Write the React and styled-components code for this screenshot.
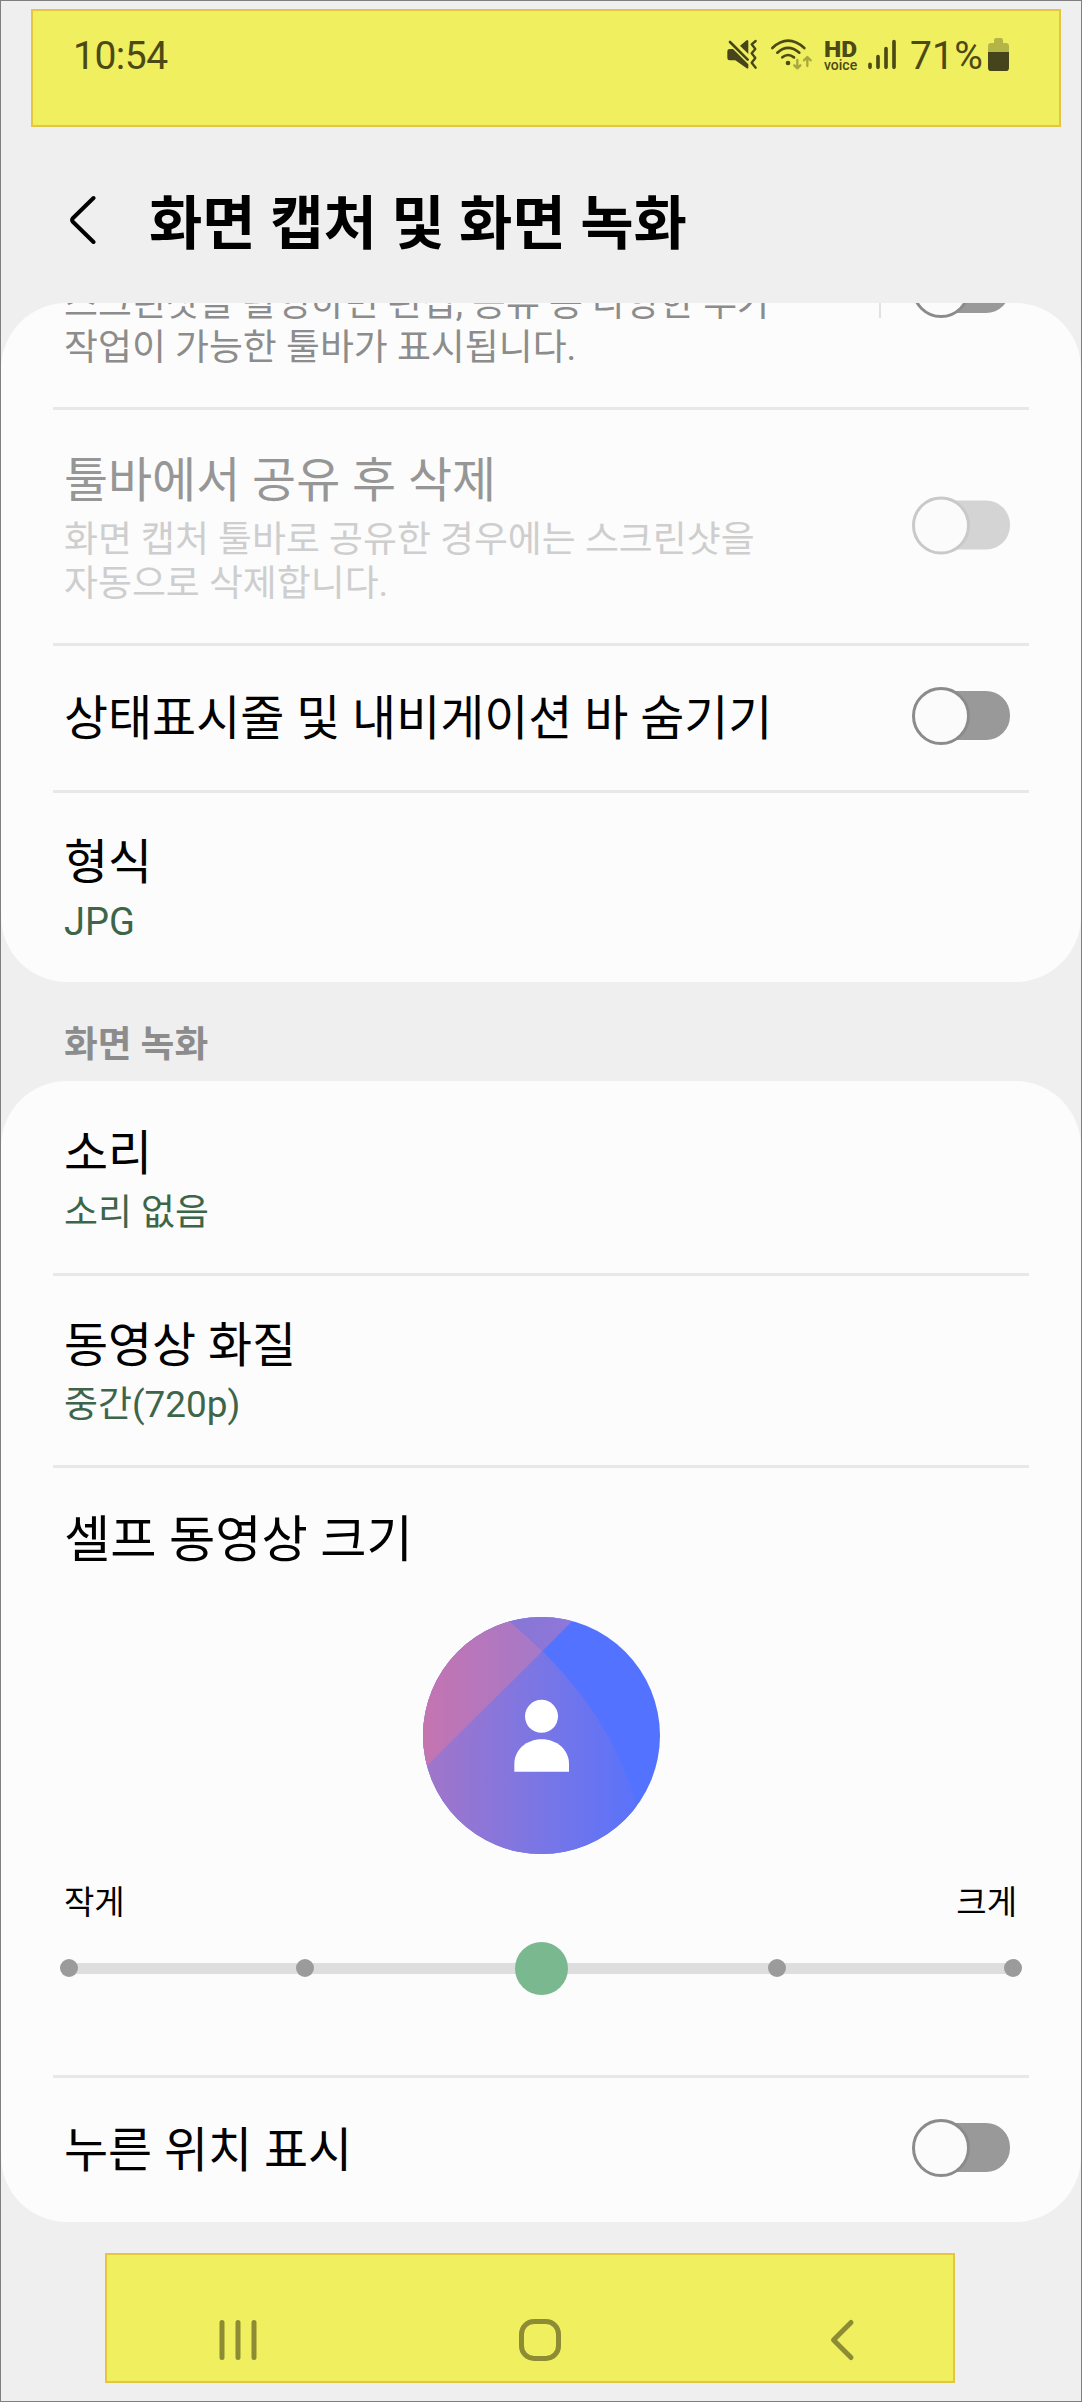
import React from "react";
import styled, { createGlobalStyle } from "styled-components";

const GlobalStyle = createGlobalStyle`
  * { box-sizing: border-box; }
  body { margin: 0; background: #efefef; }
`;

const Screen = styled.div`
  width: 1082px;
  height: 2402px;
  border: 1px solid #7f7f7f;
  background: #efefef;
  overflow: hidden;
  display: flex;
  flex-direction: column;
  color: #000;
  font-family: Roboto, "Noto Sans CJK KR", sans-serif;
`;

const Highlight = styled.div`
  display: flex;
  flex: none;
  background: #f0ef60;
  border: 2px solid #e4c63f;
`;

const StatusBar = styled(Highlight)`
  margin: 8px 20px 0 30px;
  height: 118px;
  padding: 22px 50px 0 40px;
  align-items: flex-start;
  justify-content: space-between;
  color: #4b4a14;
`;

const StatusText = styled.span`
  font-size: 39px;
  line-height: 46px;
  letter-spacing: ${(p) => p.$spacing || 0}px;
`;

const StatusIcons = styled.div`
  display: flex;
  align-items: flex-start;
  height: 46px;
`;

const StatusGlyph = styled.svg`
  display: block;
  flex: none;
  margin-right: ${(p) => p.$gap || 0}px;
  overflow: visible;
`;

const HdVoice = styled.div`
  display: flex;
  flex-direction: column;
  width: 34px;
  margin-right: 10px;
  padding-top: 7px;
`;

const HdText = styled.span`
  font-size: 21.5px;
  line-height: 19px;
  font-weight: 900;
  transform: scaleX(1.14);
  transform-origin: left;
`;

const VoiceText = styled.span`
  font-size: 14px;
  line-height: 12px;
  font-weight: 500;
`;

const Header = styled.header`
  display: flex;
  align-items: center;
  height: 176px;
  padding: 10px 0 0 68px;
  flex: none;
`;

const HeaderTitle = styled.h1`
  margin: 7px 0 0 50px;
  font-size: 58px;
  line-height: 80px;
  font-weight: 700;
  white-space: nowrap;
`;

const Card = styled.section`
  display: flex;
  flex-direction: column;
  flex: none;
  background: #fcfcfc;
  border-radius: 66px;
  overflow: hidden;
`;

const Divider = styled.div`
  height: 3px;
  flex: none;
  margin: 0 52px;
  background: #e8e8e8;
`;

const Row = styled.div`
  display: flex;
  align-items: center;
  justify-content: space-between;
  flex: none;
  height: ${(p) => p.$height}px;
  padding: 0 71px 0 63px;
`;

const ScrolledRow = styled(Row)`
  align-items: flex-start;
  margin-top: -21px;
`;

const ScrolledControls = styled.div`
  display: flex;
  gap: 31px;
  margin-top: -22px;
`;

const VerticalRule = styled.div`
  width: 2px;
  height: 58px;
  background: #e2e2e2;
`;

const TextBlock = styled.div`
  display: flex;
  flex-direction: column;
  padding-top: ${(p) => p.$top || 0}px;
`;

const ItemTitle = styled.div`
  font-size: ${(p) => (p.$large ? 50.3 : 47.9)}px;
  line-height: 60px;
  white-space: nowrap;
  color: ${(p) => (p.$disabled ? "#969696" : "#000")};
`;

const ItemNote = styled.div`
  margin-top: ${(p) => (p.$flush ? 0 : 7)}px;
  margin-bottom: -1px;
  font-size: ${(p) => (p.$latin ? 38 : 36.9)}px;
  line-height: 44px;
  white-space: pre-line;
  color: ${(p) => p.$color || "#8c8c8c"};
`;

const SectionLabel = styled.h2`
  margin: 0;
  padding: 41px 0 0 63px;
  height: 99px;
  flex: none;
  font-size: 36.7px;
  line-height: 44px;
  font-weight: 700;
  color: #8c8c8c;
`;

const SwitchTrack = styled.div`
  position: relative;
  width: 98px;
  height: 58px;
  flex: none;
  transform: translateY(${(p) => p.$shift || 0}px);

  &::before {
    content: "";
    position: absolute;
    left: 16px;
    right: 0;
    top: 4px;
    height: 49px;
    border-radius: 24px;
    background: ${(p) => (p.$disabled ? "#d4d4d4" : "#999")};
  }
`;

const SwitchThumb = styled.div`
  position: absolute;
  left: 0;
  top: 0;
  width: 58px;
  height: 58px;
  border-radius: 50%;
  border: 3px solid ${(p) => (p.$disabled ? "#c9c9c9" : "#8b8b8b")};
  background: #fbfbfb;
`;

const SizeRow = styled.div`
  display: flex;
  flex-direction: column;
  flex: none;
  height: 607px;
  padding: 42px 63px 0;
`;

const Avatar = styled.svg`
  display: block;
  align-self: center;
  margin-top: 47px;
  width: 237px;
  height: 237px;
`;

const SliderLabels = styled.div`
  display: flex;
  justify-content: space-between;
  margin-top: 27px;
  padding-right: 1px;
  font-size: 33px;
  line-height: 44px;
`;

const Slider = styled.div`
  display: flex;
  align-items: center;
  justify-content: space-between;
  height: 54px;
  margin: 16px -4px 0;
  background: linear-gradient(#dedede, #dedede) center / calc(100% - 18px) 11px no-repeat;
`;

const Stop = styled.div`
  width: ${(p) => (p.$active ? 53 : 18)}px;
  height: ${(p) => (p.$active ? 53 : 18)}px;
  margin: 0 ${(p) => (p.$active ? -17.5 : 0)}px;
  border-radius: 50%;
  background: ${(p) => (p.$active ? "#7ab98f" : "#9b9b9b")};
`;

const NavBar = styled(Highlight)`
  width: 850px;
  height: 130px;
  margin: 31px 0 0 104px;
  padding: 63px 99px 0 112px;
  align-items: flex-start;
  justify-content: space-between;
`;

const NavIcon = styled.svg`
  display: block;
  overflow: visible;
  margin-right: ${(p) => p.$gap || 0}px;
`;

const green = "#3d6549";

function Toggle({ disabled, shift }) {
  return (
    <SwitchTrack $disabled={disabled} $shift={shift}>
      <SwitchThumb $disabled={disabled} />
    </SwitchTrack>
  );
}

function MuteVibrateIcon() {
  return (
    <StatusGlyph width="30" height="46" viewBox="140 102 90 138" $gap={14}>
      <path d="M148 150H158L204 196V205Q204 211 199 208L165 184H148Q141 184 141 177V157Q141 150 148 150Z" fill="#45441a" />
      <path d="M179 140L197 125Q204 120 204 128V165Z" fill="#45441a" />
      <path d="M149 129L202 182" stroke="#45441a" strokeWidth="8" strokeLinecap="round" />
      <path d="M226 126L214 136L225 150L214 163L225 177L214 191L226 206" fill="none" stroke="#45441a" strokeWidth="7" strokeLinecap="round" strokeLinejoin="round" />
    </StatusGlyph>
  );
}

function WifiIcon() {
  return (
    <StatusGlyph width="41" height="46" viewBox="272 102 123 138" $gap={12}>
      <g fill="none" stroke="#4b4a14" strokeWidth="8" strokeLinecap="round">
        <path d="M276 147Q323 103 372 147" />
        <path d="M291 161Q323 132 357 161" />
        <path d="M306 175Q323 161 341 175" />
      </g>
      <circle cx="323" cy="192" r="7" fill="#4b4a14" />
      <g fill="none" stroke="#a9a83e" strokeWidth="7" strokeLinecap="round" strokeLinejoin="round">
        <path d="M351 183V208M342 199L351 208L360 199" />
        <path d="M381 201V175M371 184L381 174L391 184" />
      </g>
    </StatusGlyph>
  );
}

function SignalIcon() {
  return (
    <StatusGlyph width="28" height="46" viewBox="561 102 84 138" $gap={14}>
      <path d="M567 196V205M591 173V205M615 149V205M639 128V205" stroke="#4b4a14" strokeWidth="11" strokeLinecap="round" />
    </StatusGlyph>
  );
}

function BatteryIcon() {
  return (
    <StatusGlyph width="21" height="46" viewBox="924 102 63 138">
      <path d="M942 132V124Q942 117 949 117H962Q969 117 969 124V132H977Q987 132 987 142V160H924V142Q924 132 934 132Z" fill="#b5b446" />
      <path d="M924 159H987V206Q987 216 977 216H934Q924 216 924 206Z" fill="#45441a" />
    </StatusGlyph>
  );
}

function SelfVideoPreview() {
  return (
    <Avatar viewBox="66 81 711 711">
      <defs>
        <linearGradient id="body" gradientUnits="userSpaceOnUse" x1="66" y1="0" x2="740" y2="0">
          <stop offset="0" stopColor="#a375c8" />
          <stop offset="0.5" stopColor="#7b76e4" />
          <stop offset="1" stopColor="#5672fd" />
        </linearGradient>
        <linearGradient id="pink" gradientUnits="userSpaceOnUse" x1="66" y1="0" x2="424" y2="0">
          <stop offset="0" stopColor="#c574b0" />
          <stop offset="1" stopColor="#a579c9" />
        </linearGradient>
        <linearGradient id="peak" gradientUnits="userSpaceOnUse" x1="328" y1="0" x2="511" y2="0">
          <stop offset="0" stopColor="#8875d4" />
          <stop offset="1" stopColor="#8e78da" />
        </linearGradient>
        <clipPath id="disc">
          <circle cx="421.5" cy="436.5" r="355.5" />
        </clipPath>
      </defs>
      <g clipPath="url(#disc)">
        <rect x="66" y="81" width="711" height="711" fill="#5272ff" />
        <path d="M60 60H285Q615 320 706 640L740 800H60Z" fill="url(#body)" />
        <path d="M40 564L424 184Q370 130 285 60H40Z" fill="url(#pink)" />
        <path d="M285 60Q370 130 424 184L550 56Z" fill="url(#peak)" />
      </g>
      <circle cx="421.5" cy="379" r="49.5" fill="#fff" />
      <path d="M340 545V522C340 480 376 448 422 448S504 480 504 522V545Z" fill="#fff" />
    </Avatar>
  );
}

export default function App() {
  return (
    <Screen>
      <GlobalStyle />
      <StatusBar>
        <StatusText $spacing={-0.5}>10:54</StatusText>
        <StatusIcons>
          <MuteVibrateIcon />
          <WifiIcon />
          <HdVoice>
            <HdText>HD</HdText>
            <VoiceText>voice</VoiceText>
          </HdVoice>
          <SignalIcon />
          <StatusText $spacing={0.2}>71%</StatusText>
          <StatusGlyph width="5" height="46" />
          <BatteryIcon />
        </StatusIcons>
      </StatusBar>

      <Header>
        <svg width="30" height="52" viewBox="0 0 30 52">
          <path d="M24.5 4L3.8 24.2Q2.4 26 3.8 27.8L24.5 48" fill="none" stroke="#000" strokeWidth="4" strokeLinecap="round" strokeLinejoin="round" />
        </svg>
        <HeaderTitle>화면 캡처 및 화면 녹화</HeaderTitle>
      </Header>

      <Card>
        <ScrolledRow $height={125}>
          <ItemNote $flush>{"스크린샷을 촬영하면 편집, 공유 등 다양한 추가\n작업이 가능한 툴바가 표시됩니다."}</ItemNote>
          <ScrolledControls>
            <VerticalRule />
            <Toggle />
          </ScrolledControls>
        </ScrolledRow>
        <Divider />
        <Row $height={233}>
          <TextBlock $top={2}>
            <ItemTitle $disabled>툴바에서 공유 후 삭제</ItemTitle>
            <ItemNote $color="#cecece">{"화면 캡처 툴바로 공유한 경우에는 스크린샷을\n자동으로 삭제합니다."}</ItemNote>
          </TextBlock>
          <Toggle disabled shift={-1.5} />
        </Row>
        <Divider />
        <Row $height={144}>
          <TextBlock $top={1}>
            <ItemTitle>상태표시줄 및 내비게이션 바 숨기기</ItemTitle>
          </TextBlock>
          <Toggle shift={-2} />
        </Row>
        <Divider />
        <Row $height={189}>
          <TextBlock>
            <ItemTitle>형식</ItemTitle>
            <ItemNote $latin $color={green}>JPG</ItemNote>
          </TextBlock>
        </Row>
      </Card>

      <SectionLabel>화면 녹화</SectionLabel>

      <Card>
        <Row $height={192}>
          <TextBlock $top={4}>
            <ItemTitle>소리</ItemTitle>
            <ItemNote $color={green}>소리 없음</ItemNote>
          </TextBlock>
        </Row>
        <Divider />
        <Row $height={189}>
          <TextBlock>
            <ItemTitle>동영상 화질</ItemTitle>
            <ItemNote $color={green}>중간(720p)</ItemNote>
          </TextBlock>
        </Row>
        <Divider />
        <SizeRow>
          <ItemTitle $large>셀프 동영상 크기</ItemTitle>
          <SelfVideoPreview />
          <SliderLabels>
            <span>작게</span>
            <span>크게</span>
          </SliderLabels>
          <Slider>
            <Stop />
            <Stop />
            <Stop $active />
            <Stop />
            <Stop />
          </Slider>
        </SizeRow>
        <Divider />
        <Row $height={144}>
          <TextBlock $top={1}>
            <ItemTitle>누른 위치 표시</ItemTitle>
          </TextBlock>
          <Toggle shift={-2} />
        </Row>
      </Card>

      <NavBar>
        <NavIcon width="38" height="44" viewBox="0 0 38 44">
          <path d="M3 4.5V39.5M19 4.5V39.5M35 4.5V39.5" stroke="#8d8c34" strokeWidth="5" strokeLinecap="round" />
        </NavIcon>
        <NavIcon width="42" height="44" viewBox="0 0 42 44" $gap={8}>
          <rect x="2.5" y="3.5" width="37" height="37" rx="12.5" fill="none" stroke="#8d8c34" strokeWidth="5" />
        </NavIcon>
        <NavIcon width="24" height="44" viewBox="0 0 24 44">
          <path d="M21 4.5L3.5 22L21 39.5" fill="none" stroke="#8d8c34" strokeWidth="5" strokeLinecap="round" strokeLinejoin="round" />
        </NavIcon>
      </NavBar>
    </Screen>
  );
}
